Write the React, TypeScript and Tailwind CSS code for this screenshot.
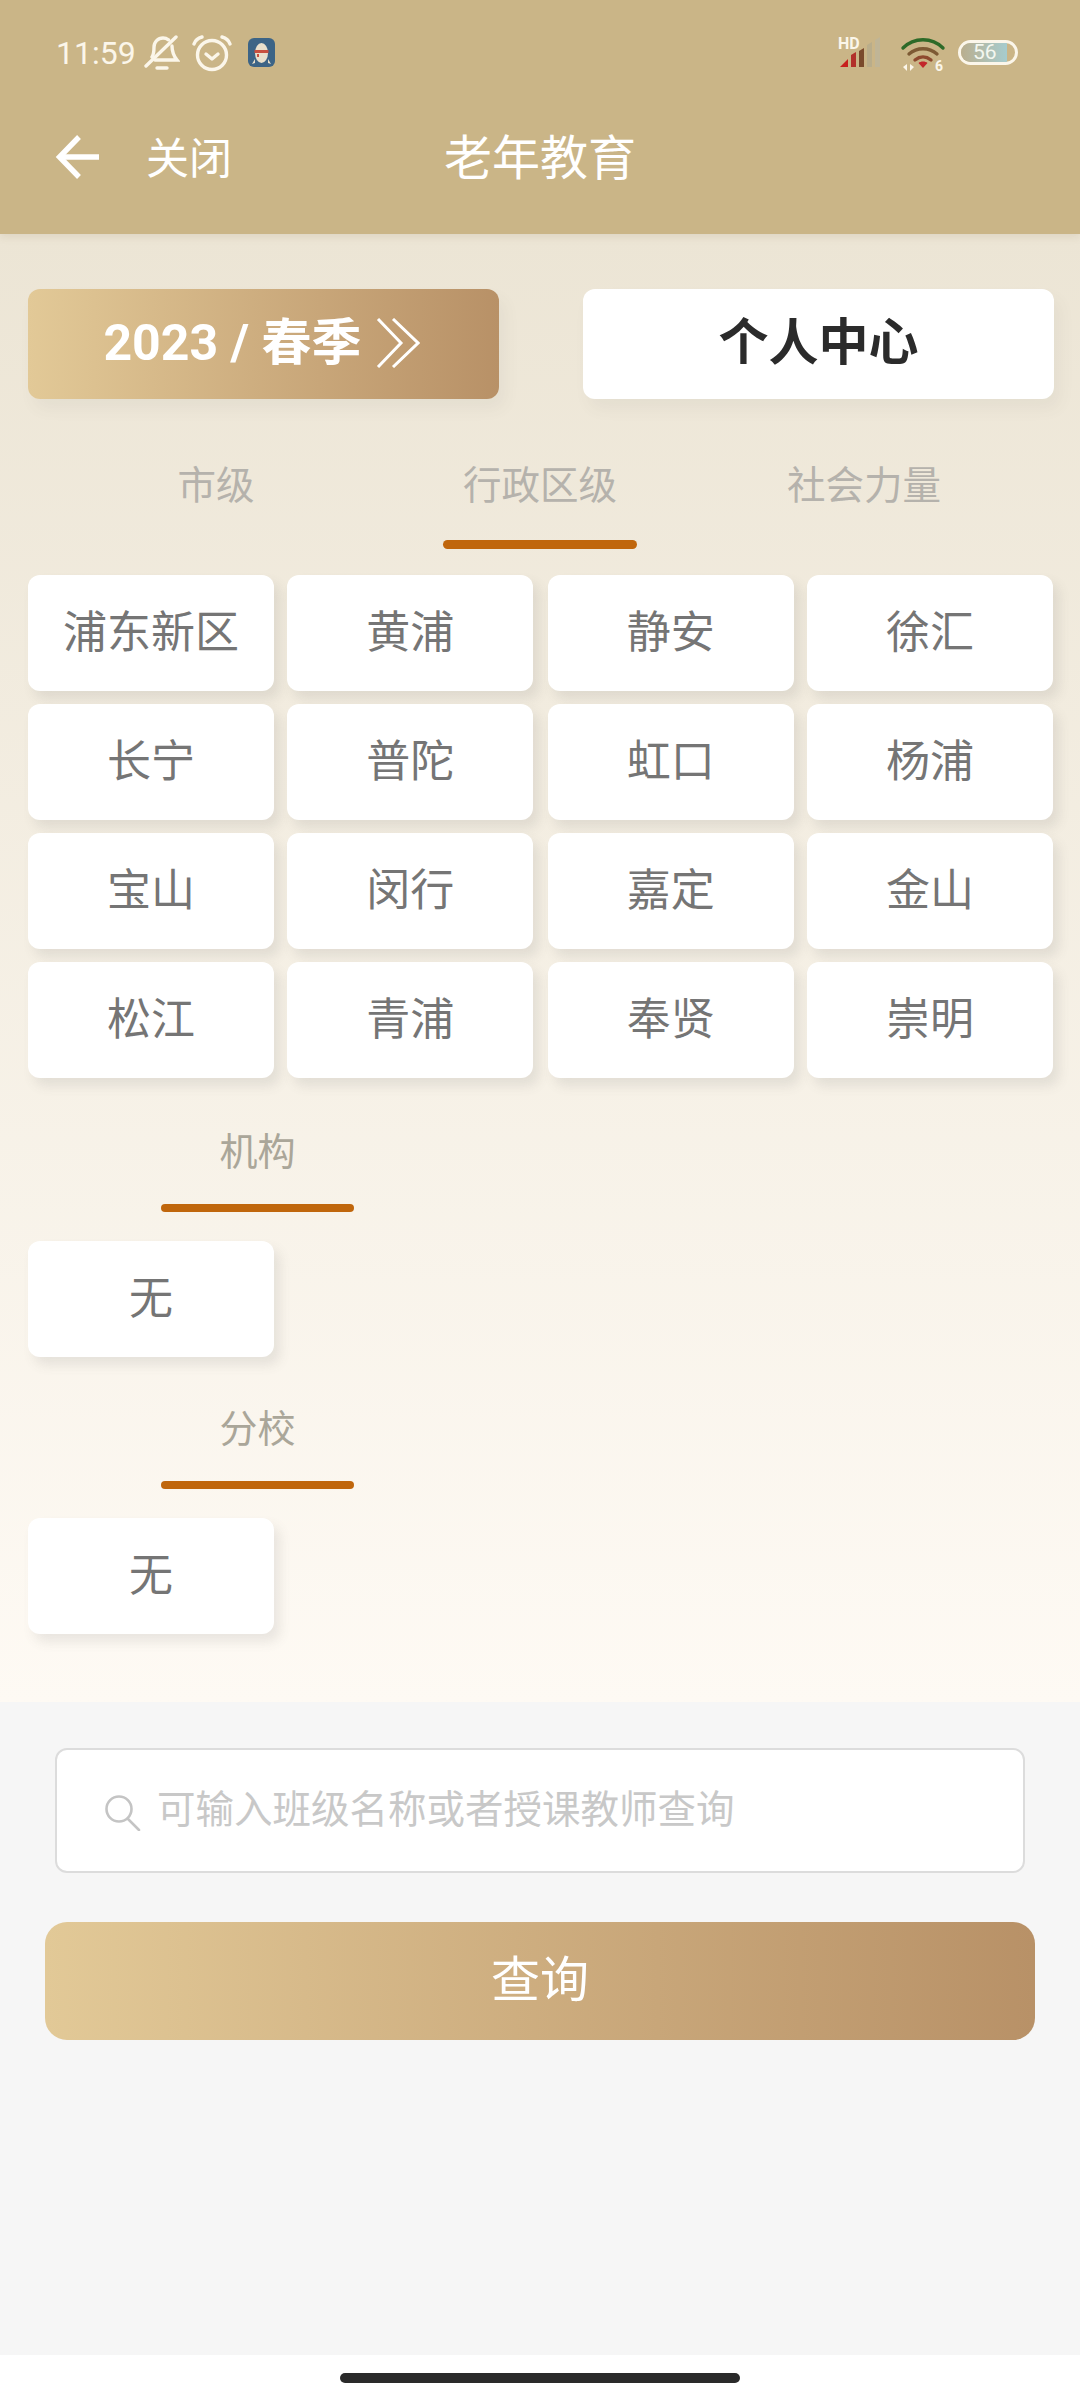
const districts = [
  '浦东新区', '黄浦', '静安', '徐汇',
  '长宁', '普陀', '虹口', '杨浦',
  '宝山', '闵行', '嘉定', '金山',
  '松江', '青浦', '奉贤', '崇明',
];

const cjk = 'font-["Roboto","Noto_Sans_CJK_SC",sans-serif]';

function Cell({ label }: { label: string }) {
  return (
    <div className="flex h-[116px] w-[246px] items-center justify-center rounded-xl bg-white text-[44px] text-[#757575] shadow-[6px_8px_12px_rgba(90,90,90,0.12)]">
      {label}
    </div>
  );
}

function SectionTitle({ label }: { label: string }) {
  return (
    <div className="ml-[133px] flex w-[193px] flex-col items-center">
      <span className="text-[38px] leading-[50px] text-[#aaa699]">{label}</span>
      <div className="mt-[27px] h-[8px] w-full rounded-full bg-[#c0660c]" />
    </div>
  );
}

function StatusBar() {
  return (
    <div className="flex h-[104px] items-center justify-between pl-[56px] pr-[62px] pt-[1px]">
      <div className="flex items-center text-[#fbf6ea]">
        <span className="font-['Roboto',sans-serif] text-[32px] leading-none">11:59</span>
        <svg className="ml-[8px]" width="36" height="38" viewBox="0 0 36 38" fill="none" stroke="currentColor" strokeWidth="3.4" strokeLinecap="round">
          <path d="M8 23c2-3 2-6 2-10 0-5 4-9 9-9 2 0 4 .7 5.500 1.800M28 12c0 5 1 9 5 14H11" />
          <path d="M2 32 32 3" />
          <path d="M13 34h10" />
        </svg>
        <svg className="ml-[12px]" width="40" height="38" viewBox="0 0 40 38" fill="none" stroke="currentColor" strokeWidth="3.4" strokeLinecap="round" strokeLinejoin="round">
          <circle cx="20" cy="21" r="14.500" />
          <path d="M14 20l6 5 6-5" />
          <path d="M2 10c1-3 4-6 8-7M38 10c-1-3-4-6-8-7" />
        </svg>
        <svg className="ml-[16px]" width="27" height="29" viewBox="0 0 27 29">
          <rect width="27" height="29" rx="6" fill="#3c6486" />
          <ellipse cx="13.500" cy="15" rx="6.500" ry="10" fill="#e9e0cc" />
          <path d="M6.500 12h14v3h-14z" fill="#c8503f" />
          <path d="M9 16l2 0 0 3-2 0z" fill="#c8503f" />
          <path d="M7 25l-3 1 3-5zM20 25l3 1-3-5z" fill="#e9e0cc" />
        </svg>
      </div>
      <div className="flex items-center">
        <svg width="44" height="38" viewBox="0 0 44 38">
          <text x="0" y="15" fontFamily="Roboto, sans-serif" fontWeight="700" fontSize="16" fill="#fbf6ea">HD</text>
          <path d="M2 33l8-8v8z" fill="#c7201d" />
          <path d="M13 33V21l5-3v15z" fill="#b2302a" />
          <path d="M21 33V17l5-3v19z" fill="#7a4a2c" />
          <path d="M29 33V11l5-3v25z" fill="#b9ad8b" />
          <path d="M37 33V6l5-3v30z" fill="#c0b596" />
        </svg>
        <svg className="ml-[18px]" width="46" height="42" viewBox="0 0 46 42" fill="none" strokeLinecap="round">
          <path d="M3 16c11-11 29-11 40 0" stroke="#2d6a28" strokeWidth="3.4" />
          <path d="M9 22c8-7 20-7 28 0" stroke="#7d5a34" strokeWidth="3.4" />
          <path d="M15 28c5-4 11-4 16 0" stroke="#8e4a2f" strokeWidth="3.4" />
          <path d="M18.500 31c2-2 7-2 9 0l-4.500 5z" fill="#c2272b" />
          <path d="M7 32v7l-4-4zM10 32v7l4-4z" fill="#fbf6ea" />
          <text x="35" y="39" fontFamily="Roboto, sans-serif" fontWeight="700" fontSize="14" fill="#fbf6ea">6</text>
        </svg>
        <div className="relative ml-[12px] flex h-[25px] w-[60px] items-center overflow-hidden rounded-full border-[3px] border-[#fbf6ea]">
          <div className="h-full w-[86%] bg-gradient-to-r from-[#b9ae8e] to-[#a6ccce]" />
          <span className="absolute left-[12px] top-[-3px] font-['Roboto',sans-serif] text-[21px] leading-[25px] text-[#f3f7f0]">56</span>
        </div>
      </div>
    </div>
  );
}

export default function App() {
  return (
    <div className={`flex h-[2400px] w-[1080px] flex-col overflow-hidden bg-[#f6f6f6] ${cjk}`}>
      <header className="z-10 h-[234px] shrink-0 bg-[#cab587] shadow-[0_3px_8px_rgba(120,100,60,0.12)]">
        <StatusBar />
        <div className="relative flex h-[108px] items-center pl-[55px] pt-[2px] text-white">
          <svg className="mt-[-4px]" width="44" height="46" viewBox="0 0 44 46" fill="none" stroke="currentColor" strokeWidth="5.4">
            <path d="M44 23H5" />
            <path d="M24 3 4.500 23 24 43" />
          </svg>
          <span className="ml-[47px] text-[43px]">关闭</span>
          <span className="absolute inset-x-0 text-center text-[48px]">老年教育</span>
        </div>
      </header>

      <main className="h-[1468px] shrink-0 bg-gradient-to-b from-[#ece5d5] to-[#fefaf4] pl-[28px] pr-[26px]">
        <div className="mt-[55px] flex items-center justify-between">
          <div className="flex h-[110px] w-[471px] items-center justify-center rounded-xl bg-gradient-to-r from-[#e2c997] to-[#b89167] pb-[2px] pl-[2px] pr-[6px] text-[50px] font-bold text-white shadow-[6px_10px_16px_rgba(90,90,90,0.06)]">
            <span>2023 / 春季</span>
            <svg className="ml-[14px]" width="44" height="50" viewBox="0 0 44 50" fill="none" stroke="currentColor" strokeWidth="3">
              <path d="M2 1l23 24L2 49" />
              <path d="M17 1l25 24-25 24" />
            </svg>
          </div>
          <div className="flex h-[110px] w-[471px] items-center justify-center rounded-xl bg-white pb-[2px] text-[50px] font-bold text-[#2b2b2b] shadow-[6px_10px_16px_rgba(90,90,90,0.06)]">
            个人中心
          </div>
        </div>

        <div className="ml-[26px] mt-[58px] flex text-[38.5px] leading-[58px] text-[#b5b2ac]">
          <div className="flex w-[324px] justify-center">市级</div>
          <div className="flex w-[324px] flex-col items-center">
            <span>行政区级</span>
            <div className="mt-[25px] h-[9px] w-[194px] rounded-full bg-[#c0660c]" />
          </div>
          <div className="flex w-[324px] justify-center">社会力量</div>
        </div>

        <div className="mt-[26px] grid w-[1025px] grid-cols-[246px_247px_246px_246px] justify-between gap-y-[13px]">
          {districts.map((name) => (
            <Cell key={name} label={name} />
          ))}
        </div>

        <div className="mt-[49px]">
          <SectionTitle label="机构" />
        </div>
        <div className="mt-[29px]">
          <Cell label="无" />
        </div>

        <div className="mt-[47px]">
          <SectionTitle label="分校" />
        </div>
        <div className="mt-[29px]">
          <Cell label="无" />
        </div>
      </main>

      <div className="flex flex-1 flex-col">
        <div className="mx-[55px] mt-[46px] flex h-[125px] items-center rounded-xl border-2 border-[#dcdcdc] bg-white pl-[48px] text-[38.5px] text-[#c8c8c8]">
          <svg className="mt-[4px]" width="36" height="36" viewBox="0 0 36 36" fill="none" stroke="#c4c4c4" strokeWidth="2.600" strokeLinecap="round">
            <circle cx="14" cy="14" r="12.500" />
            <path d="M23 24l11 11" />
          </svg>
          <span className="ml-[16px] mb-[2px]">可输入班级名称或者授课教师查询</span>
        </div>
        <div className="mx-[45px] mt-[49px] flex h-[118px] items-center justify-center rounded-[22px] bg-gradient-to-r from-[#e2c997] to-[#b89167] text-[49px] text-white">
          查询
        </div>
      </div>

      <div className="flex h-[45px] shrink-0 items-center justify-center bg-white">
        <div className="h-[10px] w-[400px] rounded-full bg-[#2a2a2a]" />
      </div>
    </div>
  );
}
